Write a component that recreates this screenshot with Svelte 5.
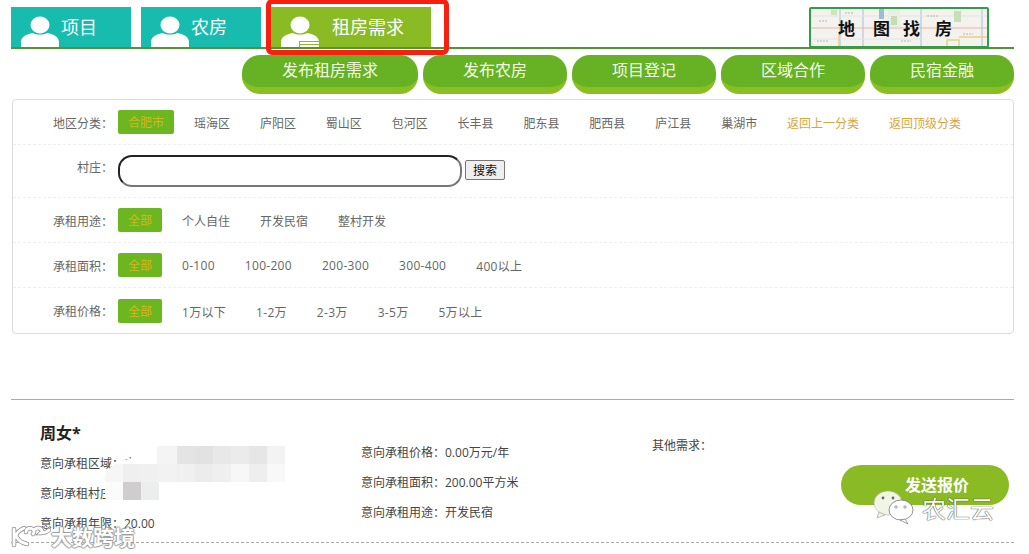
<script lang="ts">
const tabs = [
	{ label: '项目', active: false },
	{ label: '农房', active: false },
	{ label: '租房需求', active: true },
];

const actions = [
	{ label: '发布租房需求', width: 176 },
	{ label: '发布农房', width: 144 },
	{ label: '项目登记', width: 144 },
	{ label: '区域合作', width: 144 },
	{ label: '民宿金融', width: 144 },
];

const regions = ['瑶海区', '庐阳区', '蜀山区', '包河区', '长丰县', '肥东县', '肥西县', '庐江县', '巢湖市'];

const filters = [
	{ label: '承租用途：', items: ['个人自住', '开发民宿', '整村开发'], num: false },
	{ label: '承租面积：', items: ['0-100', '100-200', '200-300', '300-400', '400以上'], num: true },
	{ label: '承租价格：', items: ['1万以下', '1-2万', '2-3万', '3-5万', '5万以上'], num: true },
];

const blurA = ['#f4f4f4', '#e4e4e4', '#e2e2e2', '#e8e8e8', '#ebebeb', '#e6e6e6', '#f3f3f3'];
const blurB = ['#f2f2f2', '#f0f0f0', '#ececec', '#efefef', '#f7f7f7', '#eeeeee', '#f8f8f8'];
</script>

<div class="page">
	<header class="tabs">
		{#each tabs as tab}
			<div class="tab" class:active={tab.active}>
				<svg class="person" width="38" height="34" viewBox="0 0 38 34" fill="#fff">
					<ellipse cx="19" cy="12" rx="9.5" ry="8.5" />
					<path d="M0 34v-5c0-5 5-8 12-9 3 2 11 2 14 0 7 1 12 4 12 9v5z" />
					{#if tab.active}
						<rect x="18" y="28" width="20" height="6" fill="#8abb25" />
						<rect x="19" y="29" width="20" height="2" />
						<rect x="19" y="32" width="20" height="2" />
					{/if}
				</svg>
				<span>{tab.label}</span>
			</div>
		{/each}
		<div class="map-link">
			<svg width="176" height="37" viewBox="0 0 176 37">
				<rect width="176" height="37" fill="#f3f2ed" />
				<path d="M0 19H176" stroke="#e9b5b1" stroke-width="1" />
				<path d="M29 0V37M52 0V37M110 0V37M171 0V37" stroke="#aebcdc" stroke-width="1" />
				<path d="M0 7H176M0 30H110" stroke="#e2e4e8" stroke-width="1" />
				<rect x="68" y="0" width="5" height="10" fill="#9dbdd6" />
				<rect x="77" y="0" width="12" height="18" fill="#e8efe3" />
				<rect x="80" y="7" width="6" height="9" fill="#c5ddb6" />
				<rect x="143" y="2" width="7" height="11" fill="#c6deb9" />
				<rect x="20" y="1" width="6" height="5" fill="#cfe2c1" />
				<path d="M136 37V31H148V37M148 28H176" stroke="#f0cb8d" stroke-width="1.5" fill="none" />
				<path d="M28 26V37" stroke="#f0cb8d" stroke-width="1.5" />
				<path d="M6 32h12M34 4h8M90 32h10M116 7h12M152 25h10M8 12h8" stroke="#b5b5b5" stroke-width="1" stroke-dasharray="2 1" />
				<text x="27" y="26" class="map-text">地</text>
				<text x="62" y="26" class="map-text">图</text>
				<text x="92" y="26" class="map-text">找</text>
				<text x="124" y="26" class="map-text">房</text>
			</svg>
		</div>
	</header>

	<nav class="actions">
		{#each actions as action}
			<div class="action" style="width: {action.width}px">{action.label}</div>
		{/each}
	</nav>

	<section class="filter-box">
		<div class="row">
			<span class="row-label">地区分类：</span>
			<span class="chip wide">合肥市</span>
			<div class="regions">
				{#each regions as r}
					<span class="region">{r}</span>
				{/each}
				<span class="region back">返回上一分类</span>
				<span class="region back">返回顶级分类</span>
			</div>
		</div>
		<div class="row village">
			<span class="row-label">村庄：</span>
			<input class="village-input" type="text" />
			<button class="search">搜索</button>
		</div>
		{#each filters as f}
			<div class="row">
				<span class="row-label">{f.label}</span>
				<span class="chip">全部</span>
				<div class="options" class:num={f.num}>
					{#each f.items as item}
						<span>{item}</span>
					{/each}
				</div>
			</div>
		{/each}
	</section>

	<article class="listing">
		<div class="col-one">
			<h3>周女*</h3>
			<p>意向承租区域：广</p>
			<p>意向承租村庄</p>
			<p>意向承租年限：20.00</p>
		</div>
		<div class="col-two">
			<p>意向承租价格：0.00万元/年</p>
			<p>意向承租面积：200.00平方米</p>
			<p>意向承租用途：开发民宿</p>
		</div>
		<div class="col-three">
			<p>其他需求：</p>
			<div class="send">发送报价</div>
		</div>

		<!-- blurred-out address -->
		<div class="blob">
			<div class="mosaic-small">
				<i style="background: #f6f6f6"></i><i style="background: #efefef"></i><i style="background: #f0f0f0"></i>
				<i style="background: #fbfbfb"></i><i style="background: #cfcdcd"></i><i style="background: #eceded"></i>
			</div>
		</div>
		<div class="mosaic">
			<div class="blur-row">
				{#each blurA as c}<i style="background: {c}"></i>{/each}
			</div>
			<div class="blur-row">
				{#each blurB as c}<i style="background: {c}"></i>{/each}
			</div>
		</div>
	</article>

	<div class="annotation"></div>

	<div class="mark-left">
		<svg width="42" height="26" viewBox="0 0 42 26" fill="none" stroke-linecap="round">
			<g stroke="#8a8a8a" stroke-width="4.5">
				<path d="M5 5v16M15 4c-6 3-8 6-8 8 2 4 6 7 11 8" />
				<path d="M17 8a4 3.5 0 1 1 7 2M25 7a4 3 0 1 1 7 2c3 0 6-1 8-3" />
			</g>
			<g stroke="#fff" stroke-width="3">
				<path d="M5 5v16M15 4c-6 3-8 6-8 8 2 4 6 7 11 8" />
				<path d="M17 8a4 3.5 0 1 1 7 2M25 7a4 3 0 1 1 7 2c3 0 6-1 8-3" />
			</g>
		</svg>
		<span>大数跨境</span>
	</div>
	<div class="mark-right">
		<svg width="42" height="36" viewBox="0 0 42 36">
			<ellipse cx="15" cy="14" rx="14" ry="12" fill="#f1f5e6" stroke="#aaa" stroke-width="0.5" />
			<path d="M6 23l-2 6 8-3z" fill="#f1f5e6" stroke="#999" stroke-width="0.6" />
			<circle cx="10" cy="9" r="1.4" fill="#667" />
			<circle cx="20" cy="9" r="1.4" fill="#667" />
			<ellipse cx="28" cy="21" rx="12" ry="10" fill="#fff" stroke="#777" stroke-width="0.8" />
			<path d="M32 30l3 5-8-4z" fill="#fff" stroke="#777" stroke-width="0.7" />
			<circle cx="23" cy="18" r="1.2" fill="none" stroke="#777" stroke-width="0.7" />
			<circle cx="32" cy="18" r="1.2" fill="none" stroke="#777" stroke-width="0.7" />
		</svg>
		<span>农汇云</span>
	</div>
</div>

<style>
	:global(body) {
		margin: 0;
		background: #fff;
		font-family: 'Open Sans', 'Noto Sans CJK SC', sans-serif;
		color: #555;
		overflow: hidden;
	}

	.page {
		position: relative;
		width: 1029px;
		height: 554px;
		overflow: hidden;
		padding: 7px 11px 0;
		box-sizing: border-box;
	}

	.tabs {
		display: flex;
		align-items: flex-end;
		gap: 10px;
		width: 1003px;
		height: 42px;
		box-sizing: border-box;
		border-bottom: 2px solid #4f9535;
	}

	.tab {
		display: flex;
		align-items: flex-end;
		gap: 2px;
		width: 120px;
		height: 40px;
		padding-left: 10px;
		box-sizing: border-box;
		background: #17bcae;
		color: #fff;
		font-size: 18px;
	}

	.tab span {
		align-self: center;
		margin-top: -2px;
	}

	.tab.active {
		width: 160px;
		background: #8abb25;
		gap: 13px;
	}

	.map-link {
		margin-left: auto;
		margin-right: 25px;
		height: 41px;
		margin-bottom: -1px;
		box-sizing: border-box;
		border: 2px solid #2f9e4a;
		border-radius: 2px;
		line-height: 0;
	}

	.map-text {
		font-family: 'Noto Sans CJK SC', serif;
		font-size: 17px;
		font-weight: 700;
		fill: #111;
	}

	.actions {
		display: flex;
		justify-content: flex-end;
		gap: 5px;
		width: 1003px;
		margin-top: 6px;
	}

	.action {
		height: 32px;
		border-radius: 18px;
		background: #66b124;
		border-bottom: 7px solid #8abf24;
		color: #f2fbe8;
		font-size: 16px;
		line-height: 30px;
		text-align: center;
	}

	.filter-box {
		width: 1002px;
		margin: 5px 0 0 1px;
		border: 1px solid #ddd;
		border-radius: 4px;
		box-sizing: border-box;
		font-size: 12px;
	}

	.row {
		display: flex;
		align-items: center;
		height: 45px;
		border-bottom: 1px dashed #eee;
		box-sizing: border-box;
	}

	.row:last-child {
		border-bottom: 0;
	}

	.row.village {
		height: 53px;
	}

	.row-label {
		width: 100px;
		margin: 1px 5px 0 0;
		text-align: right;
		color: #666;
		flex-shrink: 0;
	}

	.village .row-label {
		margin-top: -8px;
	}

	.chip {
		width: 44px;
		height: 24px;
		line-height: 25px;
		text-align: center;
		background: #6cb61f;
		color: #d9b51c;
		border-radius: 2px;
		font-size: 12px;
		flex-shrink: 0;
	}

	.chip.wide {
		width: 56px;
	}

	.regions {
		display: flex;
		margin: 2px 0 0 20px;
	}

	.region {
		width: 65.9px;
		color: #666;
	}

	.region.back {
		width: 102px;
		color: #dba53c;
	}

	.options {
		display: flex;
		gap: 30px;
		margin: 2px 0 0 20px;
		color: #666;
		font-size: 12px;
	}

	.options.num {
		letter-spacing: 0.3px;
	}

	.village-input {
		width: 344px;
		height: 32px;
		box-sizing: border-box;
		border-radius: 14px;
		border: 2px solid;
		border-color: #222 #777 #777 #222;
		background: #fff;
		margin-top: -1px;
		padding: 0;
	}

	.search {
		width: 40px;
		height: 20px;
		margin-left: 3px;
		margin-top: -3px;
		padding: 0;
		font: 12px 'Noto Sans CJK SC', sans-serif;
		color: #111;
		background: #efefef;
		border: 1px solid #777;
		border-radius: 2px;
	}

	.listing {
		position: relative;
		display: flex;
		width: 1003px;
		height: 144px;
		margin-top: 65px;
		box-sizing: border-box;
		border-top: 1px solid #aaa;
		border-bottom: 1px dashed #aaa;
		font-size: 12px;
		color: #444;
	}

	.listing p {
		margin: 0;
		white-space: nowrap;
	}

	.col-one {
		width: 320px;
		padding: 21px 0 0 29px;
		box-sizing: border-box;
	}

	.col-one h3 {
		margin: 0 0 4px;
		font-size: 16px;
		line-height: 24px;
		color: #222;
		font-weight: 700;
	}

	.col-one p {
		line-height: 30px;
	}

	.col-two {
		width: 321px;
		padding: 38px 0 0 30px;
		box-sizing: border-box;
	}

	.col-two p {
		line-height: 30px;
	}

	.col-three {
		flex: 1;
		padding-top: 37px;
		position: relative;
	}

	.col-three p {
		line-height: 18px;
	}

	.send {
		position: absolute;
		top: 65px;
		right: 5px;
		width: 168px;
		height: 40px;
		padding-left: 24px;
		box-sizing: border-box;
		border-radius: 20px;
		background: #8abb25;
		color: #fff;
		font-size: 16px;
		font-weight: 700;
		line-height: 40px;
		text-align: center;
	}

	.mosaic {
		position: absolute;
		left: 146px;
		top: 46px;
	}

	.blur-row {
		display: flex;
	}

	.blur-row i {
		display: block;
		width: 18px;
		height: 18px;
	}

	.blur-row i:first-child {
		width: 20px;
	}

	.blob {
		position: absolute;
		left: 94px;
		top: 57px;
		width: 54px;
		height: 62px;
		background: #fff;
		border-radius: 40px 0 0 26px / 21px 0 0 26px;
		overflow: hidden;
	}

	.mosaic-small {
		display: grid;
		grid-template-columns: 18px 18px 18px;
		grid-template-rows: 18px 18px;
		margin-top: 7px;
	}

	.mosaic-small i {
		display: block;
	}

	.annotation {
		position: absolute;
		left: 266px;
		top: -1px;
		width: 183px;
		height: 56px;
		box-sizing: border-box;
		border: 5px solid #f5200f;
		border-radius: 6px;
	}

	.mark-left {
		position: absolute;
		left: 9px;
		top: 524px;
		display: flex;
		align-items: center;
		font-size: 21px;
		font-weight: 700;
		line-height: 26px;
		color: #fff;
		text-shadow: 1px 0 1px #999, -1px 0 1px #999, 0 1px 1px #999, 0 -1px 1px #999;
	}

	.mark-right {
		position: absolute;
		left: 873px;
		top: 489px;
		display: flex;
		align-items: center;
		gap: 7px;
		font-size: 24px;
		color: #fff;
		text-shadow: 0 0 1px #333, 0 0 1px #333;
	}
</style>
